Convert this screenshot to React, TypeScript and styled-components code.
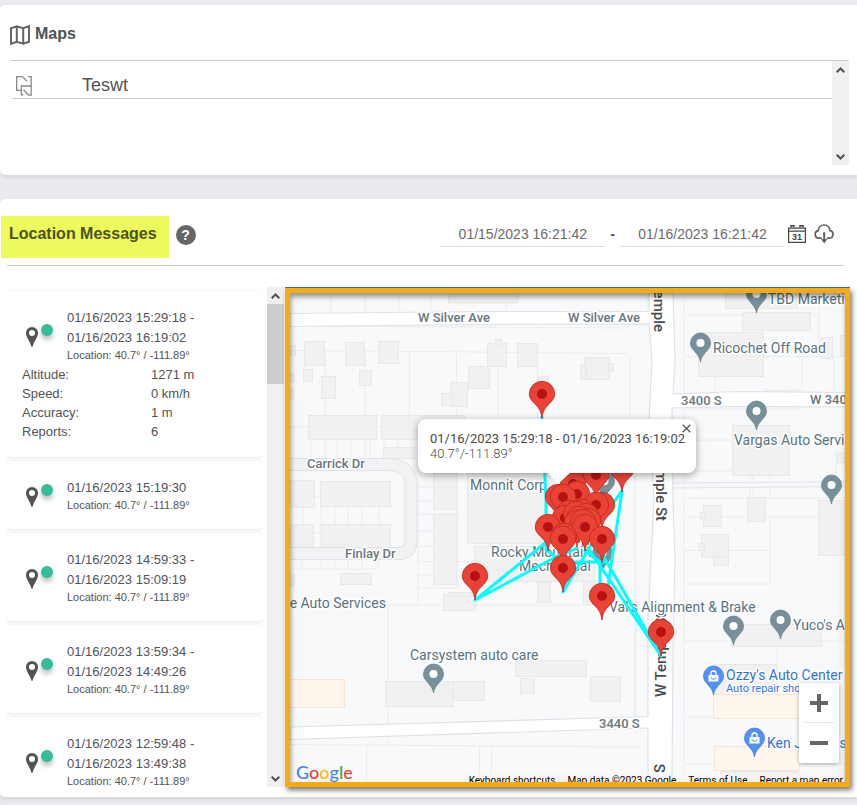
import React from "react";
import styled, { createGlobalStyle, css } from "styled-components";

const GlobalStyle = createGlobalStyle`
  * { box-sizing: border-box; }
  body {
    margin: 0;
    background: #ebeaef;
    color: #515356;
    font-family: "Liberation Sans", Arial, sans-serif;
    font-size: 13px;
  }
`;

const Page = styled.main`
  display: flex;
  flex-direction: column;
  gap: 24px;
  padding: 5px 0 8px;
`;

const Card = styled.section`
  background: #fff;
  border-radius: 5px 0 0 5px;
  box-shadow: 0 2px 5px rgba(0, 0, 0, 0.1);
`;

const MapsCard = styled(Card)`
  padding: 0 8px 10px 10px;
`;

const MessagesCard = styled(Card)`
  padding: 17px 7px 10px 0;
`;

const MapsHeader = styled.header`
  display: flex;
  align-items: center;
  gap: 5px;
  height: 56px;
  padding-top: 4px;
  border-bottom: 1px solid #cccccc;
`;

const Heading = styled.h2`
  margin: 0;
  font-size: 16px;
  line-height: 20px;
  font-weight: bold;
  color: #515356;
`;

const MapsHeading = styled(Heading)`
  padding-bottom: 2px;
`;

const MapsScroller = styled.div`
  display: flex;
  height: 104px;
`;

const MapList = styled.ul`
  flex: 1;
  margin: 0;
  padding: 0 0 0 2px;
  list-style: none;
`;

const MapRow = styled.li`
  display: flex;
  align-items: center;
  gap: 47px;
  height: 38px;
  padding: 11px 0 0 3px;
  border-bottom: 1px solid #cccccc;
`;

const MapLink = styled.a`
  color: #515356;
  font-size: 18px;
  line-height: 20px;
  text-decoration: none;
`;

const Bar = styled.div`
  display: flex;
  flex-direction: column;
  width: 17px;
  background: #f0f0f0;
`;

const ArrowButton = styled.button`
  display: flex;
  align-items: center;
  justify-content: center;
  width: 17px;
  height: 17px;
  padding: 0;
  border: 0;
  background: transparent;
`;

const Track = styled.div`
  flex: 1;
`;

const Thumb = styled.div`
  height: 80px;
  background: #cdcdcd;
`;

const MessagesHeader = styled.header`
  display: flex;
  align-items: center;
  margin: 0 6px 0 7px;
  height: 50px;
  padding-bottom: 7px;
  border-bottom: 1px solid #cccccc;
`;

const Highlight = styled.div`
  align-self: flex-start;
  height: 42px;
  margin-left: -6px;
  padding: 8px 12px 0 8px;
  background: #edfa5c;
  white-space: nowrap;

  ${Heading} {
    color: #4d531f;
  }
`;

const IconButton = styled.button`
  display: flex;
  padding: 0;
  border: 0;
  background: none;
  cursor: pointer;
`;

const HelpButton = styled(IconButton)`
  align-items: center;
  justify-content: center;
  width: 20px;
  height: 20px;
  margin: 0 auto 4px 7px;
  border-radius: 50%;
  background: #666;
  color: #fff;
  font: bold 14px "Liberation Sans", Arial, sans-serif;
`;

const DateRange = styled.div`
  display: flex;
  align-items: center;
  align-self: flex-start;
  gap: 5px;
  height: 30px;
  padding: 6px 10px 0 0;
  font-size: 14px;
  font-weight: bold;
`;

const DateInput = styled.input`
  width: 165px;
  height: 25px;
  padding: 0;
  border: 0;
  border-bottom: 1px solid #dddddd;
  background: transparent;
  color: #6b6b6b;
  font: 14px "Liberation Sans", Arial, sans-serif;
  text-align: center;
`;

const Actions = styled.div`
  display: flex;
  align-items: center;
  gap: 8px;
  height: 26px;
  margin-left: -2px;
`;

const Workspace = styled.div`
  display: grid;
  grid-template-columns: 278px 1fr;
  gap: 1px;
  height: 500px;
  margin: 21px 0 0 6px;
`;

const MessageScroller = styled.div`
  display: flex;
  gap: 4px;
  min-height: 0;
`;

const MessageList = styled.ul`
  flex: 1;
  display: flex;
  flex-direction: column;
  gap: 4px;
  margin: 0;
  padding: 4px 0 0;
  overflow: hidden;
  list-style: none;
`;

const Message = styled.li`
  flex: none;
  padding: 17px 16px 16px;
  border-radius: 5px;
  background: #fff;
  box-shadow: 0 1px 4px rgba(0, 0, 0, 0.1);
`;

const MessageHead = styled.div`
  display: flex;
  align-items: center;
  gap: 14px;
`;

const PinBox = styled.div`
  display: flex;
  gap: 3px;
  width: 31px;
  padding: 2px 0 0 4px;
`;

const StatusDot = styled.span`
  width: 12px;
  height: 12px;
  margin-top: -3px;
  border-radius: 50%;
  background: #35bd9b;
  box-shadow: 0 4px 5px rgba(0, 0, 0, 0.25);
`;

const When = styled.div`
  line-height: 20px;
`;

const Where = styled.div`
  font-size: 11px;
  line-height: 15px;
`;

const Facts = styled.dl`
  display: grid;
  grid-template-columns: 129px 1fr;
  margin: 2px 0 0;
  line-height: 19px;

  dd { margin: 0; }
`;

const MapFrame = styled.div`
  position: relative;
  margin-top: 1px;
  border: 5px solid #faab0c;
  background: #f8f9fb;
  box-shadow: 0 -1px 0 #2f6cb5, 2px 3px 5px rgba(0, 0, 0, 0.55);
  overflow: hidden;
  font-family: Roboto, sans-serif;

  &::after {
    content: "";
    position: absolute;
    inset: 0;
    box-shadow: inset 1px 4px 5px rgba(0, 0, 0, 0.4);
    pointer-events: none;
  }
`;

const MapCanvas = styled.svg`
  display: block;
  width: 100%;
  height: 100%;
`;

const Popup = styled.div`
  position: absolute;
  left: 128px;
  top: 126px;
  width: 278px;
  height: 54px;
  padding: 12px;
  border-radius: 8px;
  background: #fff;
  box-shadow: 0 2px 7px 1px rgba(0, 0, 0, 0.3);
  color: #4a4a4a;
  font-size: 13px;
  line-height: 15px;
  white-space: nowrap;
`;

const Coordinates = styled.div`
  font-weight: 300;
`;

const CloseButton = styled(IconButton)`
  position: absolute;
  right: 5px;
  top: 5px;
`;

const PopupTail = styled.svg`
  position: absolute;
  left: 257px;
  top: 179px;
`;

const ZoomPanel = styled.div`
  position: absolute;
  right: 6px;
  bottom: 19px;
  display: flex;
  flex-direction: column;
  width: 40px;
  border-radius: 2px;
  background: #fff;
  box-shadow: 0 1px 4px rgba(0, 0, 0, 0.3);
`;

const ZoomButton = styled(IconButton)<{ $divided?: boolean }>`
  align-items: center;
  justify-content: center;
  height: 40px;
  ${(p) =>
    p.$divided &&
    css`
      background: linear-gradient(#e6e6e6, #e6e6e6) center bottom / 30px 1px no-repeat;
    `}
`;

const Attribution = styled.div`
  position: absolute;
  right: 0;
  bottom: -6px;
  display: flex;
  gap: 12px;
  padding: 0 2px 0 5px;
  background: rgba(245, 245, 245, 0.7);
  color: #000;
  font-size: 10px;
  line-height: 14px;
  white-space: nowrap;

  a, button {
    padding: 0;
    border: 0;
    background: none;
    color: #000;
    font: inherit;
    text-decoration: none;
  }
`;

const Logo = styled.a`
  position: absolute;
  left: 6px;
  bottom: -2px;
  font: 500 18px/24px Lato, sans-serif;
  text-decoration: none;
`;

const Letter = styled.span<{ $color: string }>`
  color: ${(p) => p.$color};
`;

const Label = styled.text<{ $kind?: "road" | "street" | "shop" | "shopNote" }>`
  font-family: Roboto, sans-serif;
  font-size: 14px;
  fill: #57737f;
  stroke: #fff;
  stroke-width: 3px;
  stroke-linejoin: round;
  paint-order: stroke;
  ${(p) => p.$kind === "road" && css`font-size: 13px; font-weight: 500; fill: #69767d;`}
  ${(p) => p.$kind === "street" && css`font-size: 15px; font-weight: 500; fill: #484c50;`}
  ${(p) => p.$kind === "shop" && css`fill: #2f73dd;`}
  ${(p) => p.$kind === "shopNote" && css`font-size: 11px; fill: #2f73dd;`}
`;

function Scrollbar({ thumb }: { thumb?: boolean }) {
  return (
    <Bar>
      <ArrowButton aria-label="Scroll up">
        <svg width="9" height="6" viewBox="0 0 9 6" fill="none" stroke="#505050" strokeWidth="2">
          <path d="M.7 5.2 4.5 1.5 8.3 5.2" />
        </svg>
      </ArrowButton>
      <Track>{thumb && <Thumb />}</Track>
      <ArrowButton aria-label="Scroll down">
        <svg width="9" height="6" viewBox="0 0 9 6" fill="none" stroke="#505050" strokeWidth="2">
          <path d="M.7.8 4.5 4.5 8.3.8" />
        </svg>
      </ArrowButton>
    </Bar>
  );
}

const MapsIcon = () => (
  <svg width="20" height="20" viewBox="0 0 20 20" fill="none" stroke="#666" strokeWidth="2">
    <path d="M1 3.3 6.8 1.2 13.2 3.3 19 1.2V16.8L13.2 18.800 6.8 16.8 1 18.800ZM6.8 1.2V16.8M13.2 3.3V18.800" />
  </svg>
);

const FloorPlanIcon = () => (
  <svg width="20" height="21" viewBox="0 0 20 21" fill="none" stroke="#8a8a8a" strokeWidth="1.3">
    <path d="M7.5 1.6H1.7V15.3H6.4M7.5 1.6 12 6.3M13 1.6H16.2V20H13.2M6.4 20V11H16.2M6.4 20H8.2M8.6 14.8 13.2 20" />
  </svg>
);

const CalendarIcon = () => (
  <svg width="18" height="18" viewBox="0 0 18 18">
    <path d="M.6 3.1H17.4V17.4H.6ZM.6 6.2H17.4" fill="none" stroke="#444" strokeWidth="1.2" />
    <path d="M3 2.500V.8H6V2.500M12 2.500V.8H15V2.500" fill="none" stroke="#444" strokeWidth="1.4" />
    <text x="9" y="15" textAnchor="middle" fontSize="9" fontWeight="bold" fill="#444">31</text>
  </svg>
);

const CloudIcon = () => (
  <svg width="20" height="20" viewBox="0 0 20 20" fill="none" stroke="#606060" strokeWidth="1.7">
    <path d="M7.7 14.2H4.6A3.8 3.8 0 0 1 4.2 6.7C4.4 3.4 7 1 10.2 1S15.8 3.4 15.9 6.5A3.9 3.9 0 0 1 15.5 14.2H12.8" />
    <path d="M10.2 8.2V16" strokeWidth="2" />
    <path d="M7 15H13.4L10.2 19.6Z" fill="#606060" stroke="none" />
  </svg>
);

const PlaceIcon = () => (
  <svg width="12" height="20" viewBox="0 0 12 20">
    <path fillRule="evenodd" fill="#515356" d="M6 0A6 6 0 0 0 0 6.2C0 10.400 4 14 5.400 19.500Q6 20.500 6.600 19.500C8 14 12 10.400 12 6.200A6 6 0 0 0 6 0ZM6 3A3 3 0 1 1 6 9 3 3 0 0 1 6 3Z" />
  </svg>
);

interface MessageData {
  when: string[];
  facts?: [string, string][];
}

const messages: MessageData[] = [
  {
    when: ["01/16/2023 15:29:18 -", "01/16/2023 16:19:02"],
    facts: [
      ["Altitude:", "1271 m"],
      ["Speed:", "0 km/h"],
      ["Accuracy:", "1 m"],
      ["Reports:", "6"],
    ],
  },
  { when: ["01/16/2023 15:19:30"] },
  { when: ["01/16/2023 14:59:33 -", "01/16/2023 15:09:19"] },
  { when: ["01/16/2023 13:59:34 -", "01/16/2023 14:49:26"] },
  { when: ["01/16/2023 12:59:48 -", "01/16/2023 13:49:38"] },
];

const parcels =
  "M290 350.5 475 352 628 353.5M331 293V312M365 293V312M399 293V310M431 293V310M448 303H518V293M506 303V326M647 293V310M290 326 628 328V320" +
  "M325 350V415M365 350V415M409.500 352V420M456.500 352V422M498 352V420M537.500 353V470M630 353V420" +
  "M290 427H418M294 427V458M311 439V458M325 439V458M337 439V458M351 439V458M365 439V458M370 439V458M384 439V458M398 439V458M411 439V458" +
  "M290 497H374Q379 497 379 502V546M303 506V524M321 506V546M335 497V546M348 506V546M362 506V546M290 533H321M290 569H374Q379 569 379 562" +
  "M302 560V569M321 560V569M335 560V569M348 560V569M362 560V569" +
  "M418 480V605M418 487H434M418 501H434M418 514H457V473M418 531H434M418 546H434M418 561.500H632M418 575H434M418 588H458V510M388 605H628M388 605V745" +
  "M290 744.500 640 747M366.500 745V783M479.500 746V783M491.500 746V783M635 474V720M634 634V718M636 561V735" +
  "M684 293V392M684 315H819M684 356.500H845M715 356V392M764 390H802V356M819 293V356M834 356V390M684 409H802M684 409V783M684 440H733" +
  "M684 471H750M750 474V498M753 474V498M770 474V498M684 498H845M684 517H845M684 550.500H770V517M684 584H770V550M836 450V483M684 641H845M684 717H800M777 641V700M684 764H845M840 500V783";

type Rect = [number, number, number, number];

const buildings: Rect[] = [
  [304, 341, 20, 24], [345, 342, 19, 23], [378, 341, 20, 22], [303, 369, 9, 12], [321, 376, 14, 22],
  [359, 370, 12, 15], [290, 345, 5, 10], [290, 374, 4, 7], [290, 389, 3, 9], [308, 415, 68, 24],
  [381, 415, 83, 24], [383, 447, 31, 11], [468, 366, 21, 22], [450, 382, 17, 24], [441, 393, 12, 12],
  [487, 343, 19, 23], [495, 339, 6, 6], [517, 343, 20, 23], [538, 376, 10, 6], [584, 357, 25, 22],
  [580, 364, 6, 15], [608, 363, 5, 8], [448, 286, 69, 16], [290, 480, 24, 27], [320, 481, 70, 25],
  [290, 524, 23, 25], [321, 524, 69, 25], [433, 473, 23, 36], [433, 514, 23, 70], [467, 473, 88, 70],
  [474, 546, 120, 35], [340, 573, 31, 11], [290, 574, 4, 11], [443, 594, 32, 16], [448, 592, 27, 4],
  [537, 582, 13, 20], [583, 581, 13, 23], [385, 681, 99, 19], [385, 681, 68, 25], [515, 660, 71, 16],
  [520, 678, 14, 15], [590, 676, 30, 25], [725, 278, 72, 30], [742, 312, 68, 18], [698, 332, 65, 44],
  [732, 425, 57, 50], [747, 497, 18, 24], [703, 505, 18, 21], [700, 512, 5, 7], [701, 534, 27, 23],
  [713, 556, 15, 9], [698, 543, 6, 7], [818, 500, 30, 55], [821, 337, 11, 21], [840, 335, 6, 20],
  [731, 624, 90, 22], [713, 664, 63, 30], [837, 452, 10, 10], [720, 771, 78, 15],
];

const shopBuildings: Rect[] = [[285, 679, 59, 28], [713, 694, 90, 24], [714, 746, 85, 24]];

const tracks =
  "M542 417 546 500 546 550M475 600 545 543M475 600 552 559 577 548M563 592 591 545M602 518 622 491 608 586" +
  "M661 656 588 548M661 656 597 545 584 530M575 562H604M600 562V590M563 563 548 551M602 563 585 551";

type Point = [number, number];

const markers: Point[] = [
  [542, 418], [575, 497], [596, 499], [622, 492], [573, 508], [577, 518], [558, 521], [563, 521], [602, 529],
  [596, 529], [569, 537], [565, 542], [582, 536], [576, 538], [586, 540], [579, 543], [588, 545], [577, 547],
  [583, 546], [548, 551], [585, 551], [564, 560], [563, 563], [602, 563], [563, 592], [602, 620], [475, 600], [661, 656],
];

const places: Point[] = [
  [756, 313], [700, 362], [756, 430], [831, 504], [433, 693], [733, 645], [780, 639], [604, 500], [602, 572],
];

const shops: Point[] = [[713, 695], [754, 757]];

function PlacePin({ at, shop }: { at: Point; shop?: boolean }) {
  return (
    <g transform={`translate(${at[0] + 0.5} ${at[1]})`}>
      <path
        d="M0 0C-1-6-4-8-7-12C-9-14-10-16-10-19A10 10 0 0 1 10-19C10-16 9-14 7-12C4-8 1-6 0 0Z"
        fill={shop ? "#5491f5" : "#78909c"}
        stroke={shop ? "#3c78d8" : "#62808c"}
        strokeWidth="0.7"
      />
      {shop ? (
        <>
          <path d="M-5-20H5V-13.500H-5Z" fill="#fff" />
          <path d="M-2.500-20V-21.500A2.500 2.500 0 0 1 2.500-21.500V-20" fill="none" stroke="#fff" strokeWidth="1.300" />
          <path d="M-2.500-17.500Q0-14 2.500-17.500" fill="none" stroke="#5491f5" strokeWidth="1.200" />
        </>
      ) : (
        <circle cy="-19" r="4" fill="#fff" />
      )}
    </g>
  );
}

function Marker({ at }: { at: Point }) {
  return (
    <g transform={`translate(${at[0]} ${at[1]})`}>
      <path
        d="M0 0C-1-8-4-11-7.500-14.500C-11-18-12.700-20.500-12.700-24A12.700 12.700 0 0 1 12.700-24C12.700-20.500 11-18 7.500-14.500C4-11 1-8 0 0Z"
        fill="#ea4335"
        stroke="#b8281c"
        strokeWidth="0.8"
      />
      <circle cy="-24" r="5" fill="#b31412" />
    </g>
  );
}

function StreetMap() {
  return (
    <MapCanvas role="img" aria-label="Map of reported locations">
      <g transform="translate(-290 -293)">
        <path d={parcels} fill="none" stroke="#eaecee" />
        {buildings.map(([x, y, w, h], i) => (
          <rect key={i} x={x + 0.5} y={y + 0.5} width={w} height={h} fill="#f0f0f0" fillOpacity="0.9" stroke="#e8e8e9" />
        ))}
        {shopBuildings.map(([x, y, w, h], i) => (
          <rect key={i} x={x + 0.5} y={y + 0.5} width={w} height={h} fill="#fff6ee" stroke="#fbe3cf" />
        ))}
        <path
          d="M290 464.500H392Q411 467 411 485V540Q411 553.500 398 553.500H290"
          fill="none" stroke="#dfe1e4" strokeWidth="13"
        />
        <path
          d="M290 464.500H392Q411 467 411 485V540Q411 553.500 398 553.500H290"
          fill="none" stroke="#f1f2f4" strokeWidth="11"
        />
        <path d="M672 485.500 845 484" stroke="#e2e4e7" strokeWidth="6" />
        <path d="M672 485.500 845 484" stroke="#f6f7f9" strokeWidth="4" />
        <path
          d="M290 313.500 480 311.500H649V293H673L675 360 673 394 740 391.500 845 392.500V407L740 406.500 672 408 673 500 675 560 673 650 672 783H648V728L290 739.500V727L648 716.500V620L654 500 649 420 652 360 649 324 480 324.500 290 326.500Z"
          fill="#fff" stroke="#dfe1e4" strokeWidth="1.200"
        />
        {places.map((p, i) => <PlacePin key={i} at={p} />)}
        {shops.map((p, i) => <PlacePin key={i} at={p} shop />)}
        <Label $kind="road" x="418" y="322">W Silver Ave</Label>
        <Label $kind="road" x="568" y="322">W Silver Ave</Label>
        <Label $kind="road" x="307" y="468">Carrick Dr</Label>
        <Label $kind="road" x="345" y="558">Finlay Dr</Label>
        <Label $kind="road" x="681" y="405">3400 S</Label>
        <Label $kind="road" x="810" y="404">W 3400 S</Label>
        <Label $kind="road" x="599" y="728">3440 S</Label>
        <Label $kind="street" transform="translate(654 332) rotate(90)" textAnchor="end">W Temple</Label>
        <Label $kind="street" transform="translate(656 521) rotate(90)" textAnchor="end">S W Temple St</Label>
        <Label $kind="street" transform="translate(666 697) rotate(-90)">W Temple St</Label>
        <Label $kind="street" transform="translate(665 773) rotate(-90)">S</Label>
        <Label x="768" y="304">TBD Marketing</Label>
        <Label x="713" y="353">Ricochet Off Road</Label>
        <Label x="734" y="445">Vargas Auto Service</Label>
        <Label x="470" y="490">Monnit Corp</Label>
        <Label x="491" y="557">Rocky Mountain</Label>
        <Label x="519" y="571">Mechanical</Label>
        <Label x="386" y="608" textAnchor="end">The Auto Services</Label>
        <Label x="609" y="612">Val's Alignment &amp; Brake</Label>
        <Label x="793" y="630">Yuco's Auto</Label>
        <Label x="410" y="660">Carsystem auto care</Label>
        <Label $kind="shop" x="726" y="680">Ozzy's Auto Center</Label>
        <Label $kind="shopNote" x="726" y="692">Auto repair shop</Label>
        <Label $kind="shop" x="767" y="748">Ken Jones Ish</Label>
        <path d={tracks} fill="none" stroke="#00ffff" strokeWidth="3" strokeLinejoin="round" strokeLinecap="round" />
        {markers.map((p, i) => <Marker key={i} at={p} />)}
      </g>
    </MapCanvas>
  );
}

const logoLetters: [string, string][] = [
  ["G", "#4285f4"], ["o", "#ea4335"], ["o", "#fbbc04"], ["g", "#4285f4"], ["l", "#34a853"], ["e", "#ea4335"],
];

export default function App() {
  return (
    <>
      <GlobalStyle />
      <Page>
        <MapsCard>
          <MapsHeader>
            <MapsIcon />
            <MapsHeading>Maps</MapsHeading>
          </MapsHeader>
          <MapsScroller>
            <MapList>
              <MapRow>
                <FloorPlanIcon />
                <MapLink href="#teswt">Teswt</MapLink>
              </MapRow>
            </MapList>
            <Scrollbar />
          </MapsScroller>
        </MapsCard>

        <MessagesCard>
          <MessagesHeader>
            <Highlight>
              <Heading>Location Messages</Heading>
            </Highlight>
            <HelpButton aria-label="Help">?</HelpButton>
            <DateRange>
              <DateInput aria-label="From" defaultValue="01/15/2023 16:21:42" />
              <span>-</span>
              <DateInput aria-label="To" defaultValue="01/16/2023 16:21:42" />
              <Actions>
                <IconButton aria-label="Pick dates"><CalendarIcon /></IconButton>
                <IconButton aria-label="Download"><CloudIcon /></IconButton>
              </Actions>
            </DateRange>
          </MessagesHeader>

          <Workspace>
            <MessageScroller>
              <MessageList>
                {messages.map((m) => (
                  <Message key={m.when[0]}>
                    <MessageHead>
                      <PinBox>
                        <PlaceIcon />
                        <StatusDot />
                      </PinBox>
                      <div>
                        {m.when.map((line) => <When key={line}>{line}</When>)}
                        <Where>Location: 40.7° / -111.89°</Where>
                      </div>
                    </MessageHead>
                    {m.facts && (
                      <Facts>
                        {m.facts.map(([name, value]) => (
                          <React.Fragment key={name}>
                            <dt>{name}</dt>
                            <dd>{value}</dd>
                          </React.Fragment>
                        ))}
                      </Facts>
                    )}
                  </Message>
                ))}
              </MessageList>
              <Scrollbar thumb />
            </MessageScroller>

            <MapFrame>
              <StreetMap />
              <Popup>
                <div>01/16/2023 15:29:18 - 01/16/2023 16:19:02</div>
                <Coordinates>40.7°/-111.89°</Coordinates>
                <CloseButton aria-label="Close">
                  <svg width="9" height="9" viewBox="0 0 9 9" stroke="#555" strokeWidth="1.3">
                    <path d="M.7.7 8.3 8.3M8.3.7.7 8.3" />
                  </svg>
                </CloseButton>
              </Popup>
              <PopupTail width="24" height="13" viewBox="0 0 24 13">
                <path d="M0 0H24L11 12Z" fill="#fff" />
              </PopupTail>
              <Logo href="#google" aria-label="Google">
                {logoLetters.map(([ch, color], i) => <Letter key={i} $color={color}>{ch}</Letter>)}
              </Logo>
              <Attribution>
                <button>Keyboard shortcuts</button>
                <span>Map data ©2023 Google</span>
                <a href="#terms">Terms of Use</a>
                <a href="#report">Report a map error</a>
              </Attribution>
              <ZoomPanel>
                <ZoomButton $divided aria-label="Zoom in">
                  <svg width="18" height="18" viewBox="0 0 18 18" stroke="#666" strokeWidth="4">
                    <path d="M0 9H18M9 0V18" />
                  </svg>
                </ZoomButton>
                <ZoomButton aria-label="Zoom out">
                  <svg width="18" height="4" viewBox="0 0 18 4" fill="#666">
                    <path d="M0 0H18V4H0Z" />
                  </svg>
                </ZoomButton>
              </ZoomPanel>
            </MapFrame>
          </Workspace>
        </MessagesCard>
      </Page>
    </>
  );
}
